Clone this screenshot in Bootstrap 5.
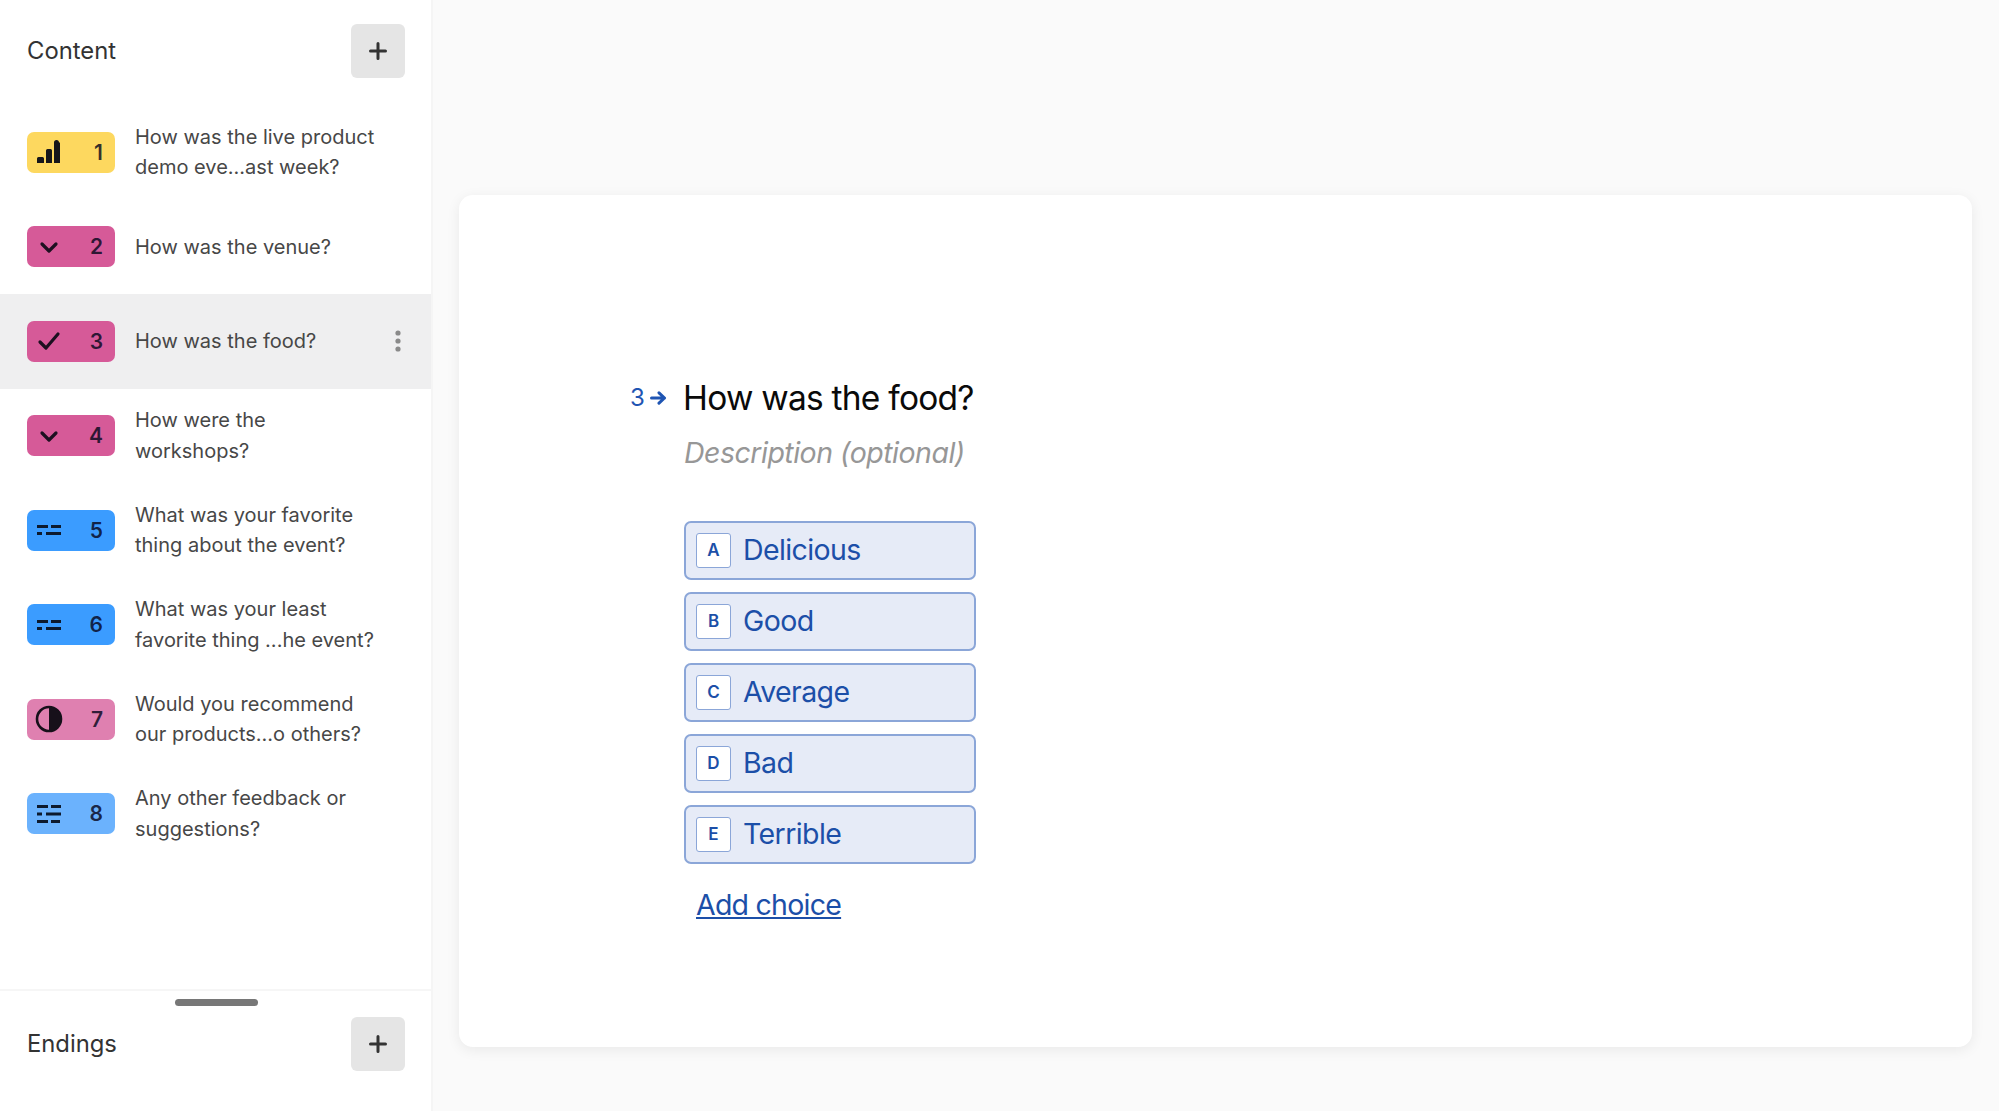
<!DOCTYPE html>
<html lang="en">
<head>
    <meta charset="UTF-8">
    <meta name="viewport" content="width=device-width, initial-scale=1.0">
    <title>Form builder</title>
    <link rel="stylesheet" href="https://cdn.jsdelivr.net/npm/bootstrap@5.3.0/dist/css/bootstrap.min.css">
    <style>
        body { font-family: Inter, "Liberation Sans", sans-serif; background: #fafafa; color: #262627; }
        .side-panel { width: 433px; flex: none; background: #fff; border-right: 2px solid #f5f5f5; }
        .side-head { height: 105px; padding: 0 26px 4px 27px; }
        .side-title { font-size: 23.8px; line-height: 1; color: #333; }
        .add-btn { width: 54px; height: 54px; padding: 0; background: #e5e5e5; border: 0; border-radius: 6px; }
        .q-row { height: 94.5px; padding: 0 26px 0 27px; }
        .q-row.is-active { background: #efeff0; }
        .q-badge { width: 88px; height: 41px; flex: none; border-radius: 7px; padding: 0 12px 0 10px; margin-right: 20px; font-size: 21px; font-weight: 600; color: rgba(8, 8, 30, .82); }
        .q-text { font-size: 20px; line-height: 30.5px; color: #474747; }
        .kebab { width: 6px; flex: none; margin-right: 4px; }
        .bg-yellow { background: #fdd85f; }
        .bg-pink { background: #d65a98; }
        .bg-rose { background: #df80b0; }
        .bg-blue { background: #3b9cff; }
        .bg-sky { background: #6bb2fd; }
        .side-foot { height: 122px; border-top: 2px solid #f6f6f6; padding: 8px 26px 0 27px; }
        .drag-handle { width: 83px; height: 7px; background: #777; border-radius: 4px; margin: 0 auto 11px; }
        .canvas { padding: 195px 27px 64px 26px; }
        .form-card { height: 852px; background: #fff; border-radius: 14px; box-shadow: 0 3px 14px rgba(0, 0, 0, .07); padding: 176px 0 0 171px; }
        .q-mark { width: 54px; flex: none; color: #1f55b3; font-size: 24px; line-height: 54px; gap: 5px; padding-left: 1px; }
        .q-title { font-size: 33.5px; line-height: 54px; color: #0a0a0a; letter-spacing: -.75px; margin: 0; font-weight: 400; }
        .q-desc { font-size: 28.5px; line-height: 40px; font-style: italic; color: #979797; letter-spacing: -.5px; margin: 8px 0 0; }
        .choice-stack { width: 292px; margin-top: 48px; gap: 12px; }
        .choice { height: 59px; padding: 0 10px; gap: 12px; background: #e6ebf7; border: 2px solid #8ba6d8; border-radius: 7px; color: #1c4fa8; font-size: 28.5px; letter-spacing: -.6px; line-height: 1; }
        .choice-key { width: 35px; height: 35px; flex: none; background: #fff; border: 1px solid #8ba6d8; border-radius: 3px; font-size: 17px; font-weight: 600; letter-spacing: 0; }
        .add-choice { display: inline-block; margin: 21px 0 0 12px; font-size: 28.5px; letter-spacing: -.75px; line-height: 40px; color: #1c4fa8; }
    </style>
</head>
<body>
    <div class="d-flex vh-100 overflow-hidden">
        <aside class="side-panel d-flex flex-column">
            <div class="side-head d-flex align-items-center justify-content-between">
                <span class="side-title">Content</span>
                <button class="add-btn d-flex align-items-center justify-content-center" type="button" aria-label="Add content">
                    <svg width="18" height="18" viewBox="0 0 18 18"><path d="M9 1.5v15M1.5 9h15" stroke="#333" stroke-width="3" stroke-linecap="round"/></svg>
                </button>
            </div>

            <div class="q-row d-flex align-items-center">
                <div class="q-badge bg-yellow d-flex align-items-center justify-content-between">
                    <svg width="24" height="24" viewBox="0 0 24 24"><path d="M0 18.5a1.5 1.5 0 0 1 1.5-1.5h4a1.5 1.500 0 0 1 1.500 1.500V23H0zM9 10.500A1.500 1.500 0 0 1 10.500 9h3a1.500 1.500 0 0 1 1.500 1.500V23H9zM17 2.500a2.500 2.500 0 0 1 5 0h1V23h-6z" fill="#16161a"/></svg>
                    <span>1</span>
                </div>
                <div class="q-text">How was the live product<br>demo eve...ast week?</div>
            </div>
            <div class="q-row d-flex align-items-center">
                <div class="q-badge bg-pink d-flex align-items-center justify-content-between">
                    <svg width="24" height="24" viewBox="0 0 24 24"><path d="M5 9l7 7 7-7" fill="none" stroke="#1d1020" stroke-width="3.2" stroke-linecap="round" stroke-linejoin="round"/></svg>
                    <span>2</span>
                </div>
                <div class="q-text">How was the venue?</div>
            </div>
            <div class="q-row is-active d-flex align-items-center">
                <div class="q-badge bg-pink d-flex align-items-center justify-content-between">
                    <svg width="24" height="24" viewBox="0 0 24 24"><path d="M3 13l6 6L21 5" fill="none" stroke="#1d1020" stroke-width="3.2" stroke-linecap="round" stroke-linejoin="round"/></svg>
                    <span>3</span>
                </div>
                <div class="q-text flex-grow-1">How was the food?</div>
                <svg class="kebab" width="6" height="22" viewBox="0 0 6 22"><circle cx="3" cy="3" r="2.6" fill="#8a8a8a"/><circle cx="3" cy="11" r="2.6" fill="#8a8a8a"/><circle cx="3" cy="19" r="2.6" fill="#8a8a8a"/></svg>
            </div>
            <div class="q-row d-flex align-items-center">
                <div class="q-badge bg-pink d-flex align-items-center justify-content-between">
                    <svg width="24" height="24" viewBox="0 0 24 24"><path d="M5 9l7 7 7-7" fill="none" stroke="#1d1020" stroke-width="3.2" stroke-linecap="round" stroke-linejoin="round"/></svg>
                    <span>4</span>
                </div>
                <div class="q-text">How were the<br>workshops?</div>
            </div>
            <div class="q-row d-flex align-items-center">
                <div class="q-badge bg-blue d-flex align-items-center justify-content-between">
                    <svg width="24" height="24" viewBox="0 0 24 24"><path d="M0 7h11v3H0zM14 7h10v3H14zM0 14h5v3H0zM9 14h15v3H9z" fill="#0d1a2e"/></svg>
                    <span>5</span>
                </div>
                <div class="q-text">What was your favorite<br>thing about the event?</div>
            </div>
            <div class="q-row d-flex align-items-center">
                <div class="q-badge bg-blue d-flex align-items-center justify-content-between">
                    <svg width="24" height="24" viewBox="0 0 24 24"><path d="M0 7h11v3H0zM14 7h10v3H14zM0 14h5v3H0zM9 14h15v3H9z" fill="#0d1a2e"/></svg>
                    <span>6</span>
                </div>
                <div class="q-text">What was your least<br>favorite thing ...he event?</div>
            </div>
            <div class="q-row d-flex align-items-center">
                <div class="q-badge bg-rose d-flex align-items-center justify-content-between">
                    <svg width="28" height="28" viewBox="0 0 28 28" style="margin-left:-2px"><circle cx="14" cy="14" r="12" fill="none" stroke="#17101a" stroke-width="2.6"/><path d="M14 2a12 12 0 0 1 0 24z" fill="#17101a"/></svg>
                    <span>7</span>
                </div>
                <div class="q-text">Would you recommend<br>our products...o others?</div>
            </div>
            <div class="q-row d-flex align-items-center">
                <div class="q-badge bg-sky d-flex align-items-center justify-content-between">
                    <svg width="24" height="24" viewBox="0 0 24 24"><path d="M0 3h11v3H0zM14 3h10v3H14zM0 10.500h5v3H0zM9 10.500h15v3H9zM0 18h11v3H0zM14 18h9v3h-9z" fill="#0d1a2e"/></svg>
                    <span>8</span>
                </div>
                <div class="q-text">Any other feedback or<br>suggestions?</div>
            </div>

            <div class="side-foot mt-auto">
                <div class="drag-handle"></div>
                <div class="d-flex align-items-center justify-content-between">
                    <span class="side-title">Endings</span>
                    <button class="add-btn d-flex align-items-center justify-content-center" type="button" aria-label="Add ending">
                        <svg width="18" height="18" viewBox="0 0 18 18"><path d="M9 1.5v15M1.5 9h15" stroke="#333" stroke-width="3" stroke-linecap="round"/></svg>
                    </button>
                </div>
            </div>
        </aside>

        <main class="canvas flex-grow-1">
            <div class="form-card">
                <div class="d-flex align-items-center" style="margin-left:-1px">
                    <div class="q-mark d-flex align-items-center">
                        <span>3</span>
                        <svg width="17" height="14" viewBox="0 0 17 14"><path d="M1.500 7h13M9 1.800L14.500 7 9 12.200" fill="none" stroke="#1f55b3" stroke-width="3" stroke-linecap="round" stroke-linejoin="round"/></svg>
                    </div>
                    <h1 class="q-title">How was the food?</h1>
                </div>
                <div style="margin-left:54px">
                    <p class="q-desc">Description (optional)</p>
                    <div class="choice-stack d-flex flex-column">
                        <div class="choice d-flex align-items-center"><span class="choice-key d-flex align-items-center justify-content-center">A</span>Delicious</div>
                        <div class="choice d-flex align-items-center"><span class="choice-key d-flex align-items-center justify-content-center">B</span>Good</div>
                        <div class="choice d-flex align-items-center"><span class="choice-key d-flex align-items-center justify-content-center">C</span>Average</div>
                        <div class="choice d-flex align-items-center"><span class="choice-key d-flex align-items-center justify-content-center">D</span>Bad</div>
                        <div class="choice d-flex align-items-center"><span class="choice-key d-flex align-items-center justify-content-center">E</span>Terrible</div>
                    </div>
                    <a class="add-choice" href="#">Add choice</a>
                </div>
            </div>
        </main>
    </div>
    <script src="https://cdn.jsdelivr.net/npm/bootstrap@5.3.0/dist/js/bootstrap.bundle.min.js"></script>
</body>
</html>
